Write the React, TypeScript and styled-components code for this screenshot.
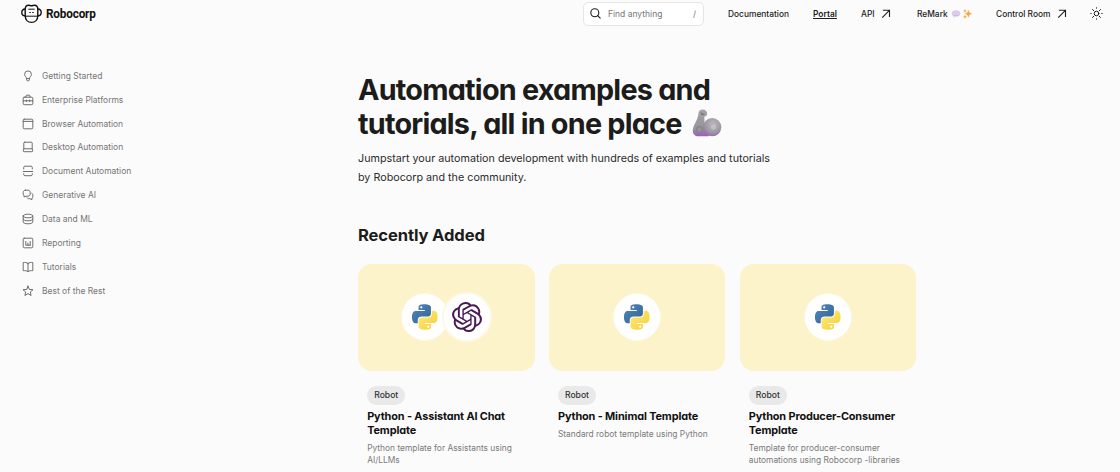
import React from "react";
import styled, { createGlobalStyle } from "styled-components";
import { SiOpenai } from "react-icons/si";

const GlobalStyle = createGlobalStyle`
  *, *::before, *::after { box-sizing: border-box; }
  html, body { margin: 0; padding: 0; background: #fbfbfb; overflow: hidden; }
  body { font-family: Inter, "Liberation Sans", sans-serif; color: #1c1c1b; }
  h1, h2, h3, p, ul { margin: 0; padding: 0; }
  a { color: inherit; text-decoration: none; }
`;

const Page = styled.div`
  height: 472px;
  overflow: hidden;
`;

const Header = styled.header`
  height: 27px;
  padding: 0 17px 0 21px;
  display: flex;
  align-items: center;
  justify-content: space-between;
`;

const Brand = styled.a`
  display: flex;
  align-items: center;
  gap: 4px;
  svg { display: block; }
`;

const BrandName = styled.span`
  font-family: Roboto, sans-serif;
  font-size: 13.5px;
  line-height: 16px;
  font-weight: 700;
  letter-spacing: -0.2px;
  color: #111;
  width: 51px;
  margin-bottom: 2px;
  white-space: nowrap;
  transform: scaleX(0.87);
  transform-origin: 0 50%;
`;

const Nav = styled.nav`
  display: flex;
  align-items: center;
`;

const SearchBox = styled.div`
  width: 121px;
  height: 24px;
  margin-right: 24px;
  padding: 0 7px 0 6px;
  display: flex;
  align-items: center;
  border: 1px solid #e6e6e6;
  border-radius: 5px;
  background: #fff;
  color: #767676;
  font-size: 8.5px;
  svg { color: #1c1c1b; margin-right: 7px; }
`;

const SearchHint = styled.span`
  flex: 1;
`;

const NavLink = styled.a<{ $width: number; $active?: boolean }>`
  width: ${(p) => p.$width}px;
  display: flex;
  align-items: center;
  font-size: 8.4px;
  line-height: 12px;
  font-weight: ${(p) => (p.$active ? 600 : 500)};
  white-space: nowrap;
  span { text-decoration: ${(p) => (p.$active ? "underline" : "none")}; text-underline-offset: 1px; }
`;

const NavIcon = styled.i<{ $gap: number }>`
  display: flex;
  align-items: center;
  gap: 2px;
  margin-left: ${(p) => p.$gap}px;
`;

const Body = styled.div`
  display: flex;
`;

const Sidebar = styled.ul`
  width: 358px;
  padding: 37px 0 0 22px;
  list-style: none;
`;

const SideItem = styled.li`
  height: 23.85px;
  display: flex;
  align-items: center;
  gap: 8px;
  font-size: 8.47px;
  color: #767676;
  svg { width: 12px; height: 12px; display: block; color: #666; }
`;

const Main = styled.main`
  width: 558px;
  padding-top: 46px;
`;

const Title = styled.h1`
  display: flex;
  flex-direction: column;
  font-size: 28.8px;
  line-height: 33.5px;
  font-weight: 700;
  letter-spacing: -0.78px;
  font-feature-settings: "cv11";
  white-space: nowrap;
`;

const TitleLine = styled.span`
  display: flex;
  align-items: center;
  height: 33.5px;
  svg { margin-left: 10px; }
`;

const Lead = styled.p`
  margin-top: 9px;
  font-size: 10.75px;
  line-height: 19px;
  color: #2b2b2b;
  white-space: nowrap;
`;

const SectionTitle = styled.h2`
  margin-top: 37px;
  font-size: 16.6px;
  line-height: 22px;
  font-weight: 700;
  letter-spacing: -0.13px;
  font-feature-settings: "cv11";
`;

const Cards = styled.div`
  margin-top: 18px;
  display: grid;
  grid-template-columns: repeat(3, 176.6px);
  gap: 14.2px;
`;

const Cover = styled.div`
  height: 107px;
  padding-bottom: 1px;
  border-radius: 14px;
  background: #fcf3ca;
  display: flex;
  align-items: center;
  justify-content: center;
`;

const Disc = styled.div<{ $overlap?: boolean }>`
  width: ${(p) => (p.$overlap ? 50 : 48)}px;
  height: ${(p) => (p.$overlap ? 50 : 48)}px;
  margin-left: ${(p) => (p.$overlap ? -7.5 : 0)}px;
  border: ${(p) => (p.$overlap ? 2 : 1)}px solid #fef9e4;
  border-radius: 50%;
  background: #fff;
  display: flex;
  align-items: center;
  justify-content: center;
`;

const CardBody = styled.div`
  padding: 14.5px 0 0 9.2px;
`;

const Tag = styled.span`
  display: inline-flex;
  align-items: center;
  height: 19px;
  padding: 0 7px;
  border-radius: 10px;
  background: #e9e9e9;
  font-size: 8.6px;
  font-weight: 500;
  color: #333;
  vertical-align: top;
`;

const CardTitle = styled.h3`
  margin-top: 3px;
  font-size: 10.9px;
  line-height: 14.3px;
  font-weight: 700;
  letter-spacing: -0.13px;
  font-feature-settings: "cv11";
  color: #111;
  white-space: pre-line;
`;

const CardText = styled.p`
  margin-top: 5px;
  font-size: 8.4px;
  line-height: 12px;
  color: #7a7a7a;
  white-space: pre-line;
`;

const Logo = () => (
  <svg width="21" height="20" viewBox="0 0 21 20" fill="none" stroke="#111" strokeWidth="1.4">
    <path d="M4.2 5.2C4.2 2.2 6 1.2 7.6 1.2c1.3 0 1.8.5 2.9.5s1.6-.5 2.9-.5c1.6 0 3.4 1 3.4 4v6.2c0 4.3-2.6 7-6.3 7s-6.3-2.7-6.3-7z" />
    <path d="M4.2 5C2 5.1.8 6.4.8 8.5s1.200 3.400 3.400 3.500M16.800 5c2.200.1 3.400 1.400 3.400 3.500s-1.200 3.400-3.400 3.500" />
    <path d="M4.400 12.200h12.200" strokeWidth="1" />
    <path d="M7.300 5.200h6.400" strokeWidth="1" />
    <path d="M8.300 8.500h1.500M11.200 8.500h1.500" strokeWidth="1" />
  </svg>
);

const SearchIcon = () => (
  <svg width="11" height="11" viewBox="0 0 11 11" fill="none" stroke="currentColor" strokeWidth="1.1" strokeLinecap="round">
    <circle cx="4.8" cy="4.8" r="4" />
    <path d="M7.700 7.700 10.200 10.200" />
  </svg>
);

const ArrowIcon = () => (
  <svg width="10" height="10" viewBox="0 0 10 10" fill="none" stroke="#1c1c1b" strokeWidth="1.1">
    <path d="M1.900 1.300h6.600v6.600M8.400 1.400 1.200 8.700" />
  </svg>
);

const SunIcon = () => (
  <svg width="13" height="13" viewBox="0 0 13 13" fill="none" stroke="#1c1c1b" strokeWidth="1" strokeLinecap="round">
    <circle cx="6.500" cy="6.500" r="2.300" />
    <path d="M6.500.8v.4M6.500 11.800v.4M.8 6.500h.4M11.800 6.500h.4M2.500 2.500l1.200 1.200M9.300 9.300l1.200 1.200M10.500 2.500 9.300 3.700M3.700 9.300l-1.200 1.200" />
  </svg>
);

const BubbleEmoji = () => (
  <svg width="10" height="10" viewBox="0 0 10 10">
    <path d="M5 1.300c2.700 0 4.400 1.200 4.400 3.100S7.700 7.500 5 7.500c-.4 0-.8 0-1.100-.1-.6.700-1.400 1-2.200 1 .5-.5.700-1 .7-1.500C1.200 6.400.6 5.500.6 4.400.6 2.500 2.300 1.300 5 1.300z" fill="#dccbea" />
    <path d="M1.500 5.600c1.500 1.600 5.500 1.600 7 0-.7 1.200-2 1.700-3.500 1.700s-2.800-.5-3.500-1.700z" fill="#bd9bd6" />
  </svg>
);

const SparklesEmoji = () => (
  <svg width="9" height="10" viewBox="0 0 9 10" fill="#f8a340" stroke="#f8a340" strokeWidth=".4" strokeLinejoin="round">
    <path d="M5.400 1.200c.5 2.200 1 2.800 3.300 3.500-2.300.7-2.800 1.300-3.300 3.500-.5-2.200-1-2.800-3.300-3.500 2.300-.7 2.800-1.300 3.300-3.500z" />
    <path d="M2 .4c.2.9.5 1.200 1.400 1.500C2.500 2.200 2.200 2.500 2 3.400 1.800 2.500 1.500 2.200.6 1.900 1.500 1.600 1.800 1.300 2 .4zM2 6.200c.2.9.6 1.300 1.500 1.600-.9.3-1.300.7-1.500 1.600-.2-.9-.6-1.300-1.500-1.600.9-.3 1.300-.7 1.500-1.600z" />
  </svg>
);

const ArmEmoji = () => (
  <svg width="30" height="28" viewBox="0 0 30 28">
    <defs>
      <linearGradient id="arm" x1="0" y1="0" x2="0" y2="1">
        <stop offset="0" stopColor="#a5a3a6" />
        <stop offset=".7" stopColor="#98949b" />
        <stop offset="1" stopColor="#9a5fb8" />
      </linearGradient>
      <radialGradient id="joint" cx=".55" cy=".35" r=".7">
        <stop offset="0" stopColor="#bdb9bf" />
        <stop offset=".6" stopColor="#9f9aa3" />
        <stop offset="1" stopColor="#9566ad" />
      </radialGradient>
    </defs>
    <path d="M6.500 4.500C6.500 2 8.400.6 10.700.6c2.600 0 4.500 1.700 4.500 4 0 1.900-1.200 3-2.900 3.100l.3 7.300 4 2v10.300H6.500C3 27.300.8 25 .8 21.700c0-2 .6-4 1.700-6.200C4.400 11.500 6.200 8.500 6.500 4.500z" fill="url(#arm)" />
    <circle cx="20.200" cy="18.200" r="9.100" fill="url(#joint)" />
    <circle cx="21.500" cy="17.800" r="3.100" fill="#c2bfc5" stroke="#aaa5ae" strokeWidth=".6" />
    <circle cx="7.500" cy="20.500" r="3.500" fill="#85828a" />
    <circle cx="7.500" cy="20.500" r="2.300" fill="#97949b" />
    <path d="M8.500 3.500 12.500 5.600M9 5.500h3" stroke="#77747a" strokeWidth=".9" />
  </svg>
);

const snake =
  "M14.25.18l.9.2.73.26.59.3.45.32.34.34.25.34.16.33.1.3.04.26.02.2-.01.13V8.5l-.05.63-.13.55-.21.46-.26.38-.3.31-.33.25-.35.19-.35.14-.33.1-.3.07-.26.04-.21.02H8.77l-.69.05-.59.14-.5.22-.41.27-.33.32-.27.35-.2.36-.15.37-.1.35-.07.32-.04.27-.02.21v3.06H3.17l-.21-.03-.28-.07-.32-.12-.35-.18-.36-.26-.36-.36-.35-.46-.32-.59-.28-.73-.21-.88-.14-1.05-.05-1.23.06-1.22.16-1.04.24-.87.32-.71.36-.57.4-.44.42-.33.42-.24.4-.16.36-.1.32-.05.24-.01h.16l.06.01h8.16v-.83H6.18l-.01-2.75-.02-.37.05-.34.11-.31.17-.28.25-.26.31-.23.38-.2.44-.18.51-.15.58-.12.64-.1.71-.06.77-.04.84-.02 1.27.05zm-6.3 1.98l-.23.33-.08.41.08.41.23.34.33.22.41.09.41-.09.33-.22.23-.34.08-.41-.08-.41-.23-.33-.33-.22-.41-.09-.41.09z";

const PythonLogo = () => (
  <svg width="25.5" height="26" viewBox="0 0 24 24">
    <defs>
      <linearGradient id="pyBlue" x1="0" y1="0" x2="1" y2="1">
        <stop offset="0" stopColor="#5189c2" />
        <stop offset="1" stopColor="#32618f" />
      </linearGradient>
      <linearGradient id="pyGold" x1="0" y1="0" x2="1" y2="1">
        <stop offset="0" stopColor="#f9cf35" />
        <stop offset="1" stopColor="#fcea7c" />
      </linearGradient>
    </defs>
    <path d={snake} fill="url(#pyBlue)" />
    <path d={snake} fill="url(#pyGold)" transform="rotate(180 12 12)" />
  </svg>
);

const Outline = ({ children }: { children: React.ReactNode }) => (
  <svg viewBox="0 0 12 12" fill="none" stroke="currentColor" strokeWidth=".95" strokeLinejoin="round" strokeLinecap="round">
    {children}
  </svg>
);

const sections = [
  { label: "Getting Started", icon: <path d="M4.6 8.2C4.5 7 2.6 6.500 2.600 4.300a3.400 3.400 0 0 1 6.800 0C9.400 6.500 7.500 7 7.400 8.200zM4.600 8.200v1.600c0 .6.4 1 1 1h.8c.6 0 1-.4 1-1V8.200" /> },
  { label: "Enterprise Platforms", icon: <path d="M2.200 3.200h7.600c.6 0 1 .4 1 1v5.500c0 .6-.4 1-1 1H2.200c-.6 0-1-.4-1-1V4.200c0-.6.4-1 1-1zM4 3.200V2c0-.5.3-.8.8-.8h2.400c.5 0 .8.3.8.8v1.200M1.200 6.800h2.600M5 6.800h2M8.200 6.800h2.600M4.400 6v1.600M7.600 6v1.600" /> },
  { label: "Browser Automation", icon: <path d="M2.200 1.200h7.600c.6 0 1 .4 1 1v7.600c0 .6-.4 1-1 1H2.200c-.6 0-1-.4-1-1V2.200c0-.6.4-1 1-1zM1.200 3.400h9.600" /> },
  { label: "Desktop Automation", icon: <path d="M2.700 1.200h6.600c.5 0 .9.4.9.9v5.700H1.800V2.100c0-.5.4-.9.9-.9zM1.800 7.800l-.6 1.900c-.1.6.3 1 .9 1h7.800c.6 0 1-.4.9-1l-.6-1.900" /> },
  { label: "Document Automation", icon: <path d="M1.700 4V2.400c0-.7.5-1.200 1.200-1.200h6.200c.7 0 1.200.5 1.200 1.200V4M1.200 6.500h9.600M1.700 8.700v.8c0 .7.5 1.200 1.200 1.200h6.200c.7 0 1.200-.5 1.200-1.200v-.8" /> },
  { label: "Generative AI", icon: <path d="M3.400 1.200h2.600c1.300 0 2.200.9 2.200 2.200v1.600c0 1.300-.9 2.200-2.200 2.200H4L2 8V6.700c-.5-.4-.8-1-.8-1.700V3.400c0-1.300.9-2.200 2.200-2.200zM9.900 4.200c.6.300.9.900.9 1.500v2c0 .6-.3 1.100-.8 1.400v1.600L8 9.700H6.800c-.8 0-1.400-.3-1.700-.9" /> },
  { label: "Data and ML", icon: <path d="M1.200 3c0-1 2.100-1.800 4.800-1.800s4.800.8 4.800 1.800S8.700 4.800 6 4.800 1.200 4 1.200 3zM1.200 3v6c0 1 2.100 1.800 4.800 1.800s4.800-.8 4.800-1.800V3M1.200 6c0 1 2.100 1.800 4.800 1.800S10.800 7 10.800 6" /> },
  { label: "Reporting", icon: <path d="M2.200 1.200h7.600c.6 0 1 .4 1 1v7.600c0 .6-.4 1-1 1H2.200c-.6 0-1-.4-1-1V2.200c0-.6.4-1 1-1zM3.800 4.400v3.800h4.500M5.900 6v2.200M8.200 4.400v3.800" /> },
  { label: "Tutorials", icon: <path d="M6 2.400C4.700 1.500 3 1.300 1.200 1.500v8.200c1.800-.2 3.500 0 4.800.9 1.300-.9 3-1.100 4.800-.9V1.500C9 1.300 7.300 1.500 6 2.400zM6 2.400v8.200" /> },
  { label: "Best of the Rest", icon: <path d="M6 1.100l1.400 3.300 3.600.3-2.700 2.300.8 3.500L6 8.600l-3.100 1.900.8-3.500L1 4.700l3.600-.3z" strokeLinejoin="miter" /> },
];

const cards = [
  { title: "Python - Assistant AI Chat\nTemplate", text: "Python template for Assistants using\nAI/LLMs", assistant: true },
  { title: "Python - Minimal Template", text: "Standard robot template using Python" },
  { title: "Python Producer-Consumer\nTemplate", text: "Template for producer-consumer\nautomations using Robocorp -libraries" },
];

export default function App() {
  return (
    <Page>
      <GlobalStyle />
      <Header>
        <Brand href="#">
          <Logo />
          <BrandName>Robocorp</BrandName>
        </Brand>
        <Nav>
          <SearchBox>
            <SearchIcon />
            <SearchHint>Find anything</SearchHint>/
          </SearchBox>
          <NavLink href="#" $width={85}><span>Documentation</span></NavLink>
          <NavLink href="#" $width={48} $active><span>Portal</span></NavLink>
          <NavLink href="#" $width={56}><span>API</span><NavIcon $gap={6.5}><ArrowIcon /></NavIcon></NavLink>
          <NavLink href="#" $width={79}>
            <span>ReMark</span>
            <NavIcon $gap={3}><BubbleEmoji /><SparklesEmoji /></NavIcon>
          </NavLink>
          <NavLink href="#" $width={94}><span>Control Room</span><NavIcon $gap={7}><ArrowIcon /></NavIcon></NavLink>
          <SunIcon />
        </Nav>
      </Header>
      <Body>
        <Sidebar>
          {sections.map((s) => (
            <SideItem key={s.label}>
              <Outline>{s.icon}</Outline>
              {s.label}
            </SideItem>
          ))}
        </Sidebar>
        <Main>
          <Title>
            <TitleLine>Automation examples and</TitleLine>
            <TitleLine>tutorials, all in one place<ArmEmoji /></TitleLine>
          </Title>
          <Lead>
            Jumpstart your automation development with hundreds of examples and tutorials
            <br />
            by Robocorp and the community.
          </Lead>
          <SectionTitle>Recently Added</SectionTitle>
          <Cards>
            {cards.map((c) => (
              <article key={c.title}>
                <Cover>
                  <Disc><PythonLogo /></Disc>
                  {c.assistant && <Disc $overlap><SiOpenai size={30} color="#4b1a56" /></Disc>}
                </Cover>
                <CardBody>
                  <Tag>Robot</Tag>
                  <CardTitle>{c.title}</CardTitle>
                  <CardText>{c.text}</CardText>
                </CardBody>
              </article>
            ))}
          </Cards>
        </Main>
      </Body>
    </Page>
  );
}
